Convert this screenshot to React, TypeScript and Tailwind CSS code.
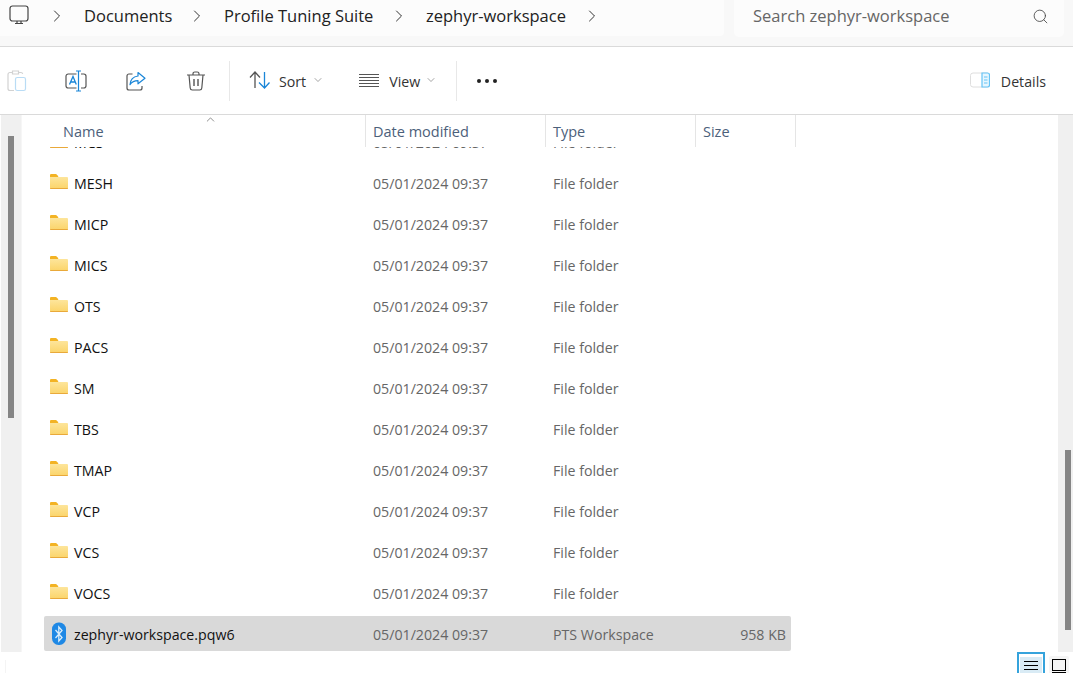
import { ChevronRight, ChevronDown, ChevronUp, Search } from 'lucide-react'

const FOLDERS = ['MESH', 'MICP', 'MICS', 'OTS', 'PACS', 'SM', 'TBS', 'TMAP', 'VCP', 'VCS', 'VOCS']
const ROW_GRID = 'grid grid-cols-[329px_180px_150px_88px] items-center h-[35px] pt-[2px] ml-[22px] w-[747px] text-[14.2px] rounded-[2px]'

function FolderIcon() {
  return (
    <svg width="18" height="15" viewBox="0 0 18 15" className="ml-[6px] mr-[6px] shrink-0 -translate-y-[2px]">
      <defs>
        <linearGradient id="folderBody" x1="0" y1="0" x2="0" y2="1">
          <stop offset="0" stopColor="#fde59b" />
          <stop offset="1" stopColor="#fbd469" />
        </linearGradient>
      </defs>
      <path d="M0 1.2C0 .5.6 0 1.3 0h4.3c.4 0 .7.1 1 .4L8.2 2v1.5H0z" fill="#f3b324" />
      <path d="M0 3h16.8c.7 0 1.2.5 1.2 1.1V13.8c0 .7-.5 1.2-1.2 1.2H1.2C.5 15 0 14.5 0 13.8z" fill="url(#folderBody)" />
      <path d="M0 13.9h18v.1c0 .6-.5 1-1.2 1H1.2C.5 15 0 14.6 0 14z" fill="#e9a93a" />
    </svg>
  )
}

function BluetoothIcon() {
  return (
    <svg width="16" height="24" viewBox="0 0 16 24" className="ml-[7px] mr-[7px] shrink-0 -translate-y-[1px]">
      <rect x="1" y="0.5" width="14" height="22.5" rx="6.5" fill="#1e88e5" />
      <path d="M4.5 8l6.5 7.5-3.2 3.5V5l3.2 3.5L4.5 16" fill="none" stroke="#d8ecfb" strokeWidth="1.3" />
    </svg>
  )
}

function MonitorIcon() {
  return (
    <svg width="20" height="20" viewBox="0 0 20 20" fill="none" stroke="#444" strokeWidth="1.2">
      <rect x="1" y="1" width="18" height="15" rx="2.5" />
      <path d="M8 16v2.4M12 16v2.4M6 18.5h8" />
    </svg>
  )
}

function PasteIcon() {
  return (
    <svg width="20" height="22" viewBox="0 0 20 22" fill="none" className="ml-[7px]">
      <path d="M5 2.5H3C1.8 2.5 1 3.3 1 4.5v14c0 1.2.8 2 2 2h4" stroke="#d2d2d2" strokeWidth="1.2" />
      <path d="M12 2.5h2c1 0 1.5.5 1.7 1.4M5.5 1h6v3h-6z" stroke="#d2d2d2" strokeWidth="1.2" />
      <rect x="8.5" y="7.5" width="10" height="13" rx="1.8" stroke="#b9dcf5" strokeWidth="1.2" />
    </svg>
  )
}

function RenameIcon() {
  return (
    <svg width="22" height="22" viewBox="0 0 22 22" fill="none">
      <path d="M11.5 4H3.2C2 4 1 5 1 6.2v9.6C1 17 2 18 3.2 18h8.3M16 4h2.8C20 4 21 5 21 6.2v9.6c0 1.2-1 2.2-2.2 2.2H16" stroke="#555" strokeWidth="1.2" />
      <path d="M11 1h5M13.5 1v20M11 21h5" stroke="#1a86d8" strokeWidth="1.2" />
      <path d="M4.5 14.5L8 6.5l3.3 8M5.7 12h4.5" stroke="#1a86d8" strokeWidth="1.3" />
    </svg>
  )
}

function ShareIcon() {
  return (
    <svg width="20" height="20" viewBox="0 0 20 20" fill="none">
      <path d="M6.5 3H3C1.8 3 1 3.8 1 5v12c0 1.2.8 2 2 2h11c1.2 0 2-.8 2-2v-2" stroke="#555" strokeWidth="1.2" />
      <path d="M12 1.5l7 5.7-7 5.6V9.7c-3.5 0-6 1-8 4 .4-5 3.2-8.2 8-8.7z" stroke="#1a86d8" strokeWidth="1.2" strokeLinejoin="round" />
    </svg>
  )
}

function TrashIcon() {
  return (
    <svg width="20" height="20" viewBox="0 0 20 20" fill="none" stroke="#555" strokeWidth="1.2">
      <path d="M1 4h18M7 4V2.8C7 1.8 7.8 1 8.8 1h2.4c1 0 1.8.8 1.8 1.8V4" />
      <path d="M3 4l1.2 13c.1 1.2 1 2 2.1 2h7.4c1.1 0 2-.8 2.1-2L17 4" />
      <path d="M8 8v7M12 8v7" strokeWidth="1.4" />
    </svg>
  )
}

function SortIcon() {
  return (
    <svg width="21" height="18" viewBox="0 0 21 18" fill="none" strokeWidth="1.3">
      <path d="M1 6.5L6 1l5 5.5M6 1v16" stroke="#555" />
      <path d="M10 11.5l5.5 5.5 5-5.5M15.5 17V1" stroke="#1a86d8" />
    </svg>
  )
}

function ViewIcon() {
  return (
    <svg width="20" height="14" viewBox="0 0 20 14" fill="none" stroke="#555" strokeWidth="1">
      <path d="M0 1.5h20M0 4.5h20M0 7.5h20M0 10.5h20M0 13.5h20" />
    </svg>
  )
}

function DetailsIcon() {
  return (
    <svg width="20" height="16" viewBox="0 0 20 16" fill="none">
      <rect x="0.5" y="1" width="19" height="14" rx="2.5" stroke="#dedede" />
      <path d="M12 1h5.5c1.1 0 2 .9 2 2v10c0 1.1-.9 2-2 2H12z" stroke="#66c4f5" strokeWidth="1.2" fill="#e7f6fe" />
      <path d="M14 5h3.5M14 8h3.5M14 11h3.5" stroke="#66c4f5" />
    </svg>
  )
}

function Divider() {
  return <div className="w-px h-[40px] bg-[#e8e8e8]" />
}

function Crumb({ label, width }: { label: string; width: string }) {
  return (
    <div className={`flex items-center ${width}`}>
      <ChevronRight size={20} strokeWidth={1.2} className="text-[#333] mr-[17px] shrink-0" />
      <span className="text-[16.5px] text-[#222] whitespace-nowrap">{label}</span>
    </div>
  )
}

function HeaderCell({ label, width, inset }: { label: string; width: string; inset: string }) {
  return (
    <div className={`${width} ${inset} h-full pt-[2px] border-r border-[#e5e5e5] flex items-center`}>
      <span className="text-[14.5px] text-[#4c607a]">{label}</span>
    </div>
  )
}

function FileRow({ name, folder }: { name: string; folder: boolean }) {
  return (
    <div className={`${ROW_GRID} ${folder ? '' : 'bg-[#d9d9d9]'}`}>
      <div className="flex items-center text-[#111]">
        {folder ? <FolderIcon /> : <BluetoothIcon />}
        <span>{name}</span>
      </div>
      <span className="text-[#666]">05/01/2024 09:37</span>
      <span className="text-[#666]">{folder ? 'File folder' : 'PTS Workspace'}</span>
      <span className="text-[#666] text-right pr-[5px]">{folder ? '' : '958 KB'}</span>
    </div>
  )
}

export default function App() {
  return (
    <div className="w-[1073px] h-[673px] overflow-hidden bg-white flex flex-col font-['Open_Sans','Noto_Sans',sans-serif]">
      {/* address bar */}
      <div className="h-[47px] shrink-0 bg-[#f8f8f8] border-b border-[#dadada] flex items-start gap-[10px] pr-[9px]">
        <div className="w-[724px] h-[36px] pb-[4px] bg-[#fcfcfc] rounded-br-[4px] flex items-center">
          <div className="ml-[9px] mr-[18px] mt-[-2px]">
            <MonitorIcon />
          </div>
          <Crumb label="Documents" width="w-[140px]" />
          <Crumb label="Profile Tuning Suite" width="w-[202px]" />
          <Crumb label="zephyr-workspace" width="w-[193px]" />
          <ChevronRight size={20} strokeWidth={1.2} className="text-[#333]" />
        </div>
        <div className="w-[330px] h-[37px] pb-[5px] bg-[#fcfcfc] rounded-b-[5px] flex items-center justify-between pl-[19px] pr-[15px]">
          <span className="text-[16.5px] text-[#666]">Search zephyr-workspace</span>
          <Search size={17} strokeWidth={1.2} className="text-[#444]" />
        </div>
      </div>

      {/* toolbar */}
      <div className="h-[68px] shrink-0 border-b border-[#dadada] flex items-center text-[14.2px] text-[#333]">
        <PasteIcon />
        <div className="ml-[38px]">
          <RenameIcon />
        </div>
        <div className="ml-[39px]">
          <ShareIcon />
        </div>
        <div className="ml-[40px]">
          <TrashIcon />
        </div>
        <div className="ml-[23px]">
          <Divider />
        </div>
        <div className="ml-[19px] flex items-center">
          <SortIcon />
          <span className="ml-[9px] translate-y-[1px]">Sort</span>
          <ChevronDown size={12} strokeWidth={1.2} className="ml-[6px] text-[#666]" />
        </div>
        <div className="ml-[35px] flex items-center">
          <ViewIcon />
          <span className="ml-[10px] translate-y-[1px]">View</span>
          <ChevronDown size={12} strokeWidth={1.2} className="ml-[5px] text-[#666]" />
        </div>
        <div className="ml-[19px]">
          <Divider />
        </div>
        <div className="ml-[20px] flex gap-[4px]">
          <span className="w-[4px] h-[4px] rounded-full bg-[#222]" />
          <span className="w-[4px] h-[4px] rounded-full bg-[#222]" />
          <span className="w-[4px] h-[4px] rounded-full bg-[#222]" />
        </div>
        <div className="ml-auto mr-[27px] flex items-center gap-[11px]">
          <DetailsIcon />
          <span className="translate-y-[1px]">Details</span>
        </div>
      </div>

      {/* file list */}
      <div className="h-[537px] shrink-0 flex">
        <div className="w-[22px] shrink-0 border-r border-[#f6f6f6] pl-[1px]">
          <div className="w-full h-full bg-[#f0f0f0] pt-[21px] pl-[7px]">
            <div className="w-[6px] h-[282px] bg-[#858585]" />
          </div>
        </div>
        <div className="flex-1 min-w-0 flex flex-col relative">
          <ChevronUp size={13} strokeWidth={1.2} className="absolute left-[182px] top-[-2px] text-[#555]" />
          <div className="h-[32px] shrink-0 flex">
            <HeaderCell label="Name" width="w-[344px]" inset="pl-[41px]" />
            <HeaderCell label="Date modified" width="w-[180px]" inset="pl-[7px]" />
            <HeaderCell label="Type" width="w-[150px]" inset="pl-[7px]" />
            <HeaderCell label="Size" width="w-[100px]" inset="pl-[7px]" />
          </div>
          <div className="flex-1 overflow-hidden">
            <div className="mt-[-23px] flex flex-col gap-[6px]">
              <FileRow name="MCS" folder />
              {FOLDERS.map((name) => (
                <FileRow key={name} name={name} folder />
              ))}
              <FileRow name="zephyr-workspace.pqw6" folder={false} />
            </div>
          </div>
        </div>
        <div className="w-[15px] shrink-0 bg-[#f0f0f0] pt-[335px] pl-[7px]">
          <div className="w-[6px] h-[180px] bg-[#858585]" />
        </div>
      </div>

      {/* status bar */}
      <div className="flex-1 flex items-start justify-end gap-[4px] pr-[4px] pl-[5px]">
        <div className="w-px h-[13px] mt-[8px] bg-[#f4f4f4] mr-auto" />
        <div className="w-[28px] h-[30px] border-2 border-[#35a3dc] bg-white pt-[3px] px-[1px]">
          <div className="h-full bg-[#d9ebf5] flex flex-col gap-[3px] pt-[4px] px-[4px]">
            <div className="h-px shrink-0 bg-black" />
            <div className="h-px shrink-0 bg-black" />
            <div className="h-px shrink-0 bg-black" />
            <div className="h-px shrink-0 bg-black" />
          </div>
        </div>
        <div className="w-[20px] h-[30px] mt-[4px] bg-[#f5f5f5] rounded-[2px] pt-[3px] px-[3px]">
          <div className="h-[12px] border border-black" />
          <div className="h-px bg-black mt-[1px]" />
        </div>
      </div>
    </div>
  )
}
